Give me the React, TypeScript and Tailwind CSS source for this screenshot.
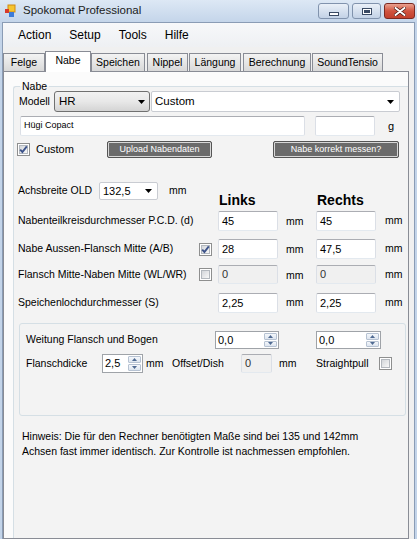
import React from 'react';

// Small triangle used by the combo boxes
function DropArrow() {
  return (
    <svg width="7" height="4" viewBox="0 0 7 4" className="shrink-0">
      <path d="M0 0 H7 L3.5 4 Z" fill="#000" />
    </svg>
  );
}

function CheckBox({ checked }: { checked?: boolean }) {
  return (
    <span className="relative w-[13px] h-[13px] shrink-0 border border-[#8e8f8f] bg-white p-[1px] flex">
      <span className="flex-1 border border-[#b3b8be] bg-gradient-to-br from-[#d3d6da] to-[#f8f8f8]" />
      {checked && (
        <svg width="13" height="13" viewBox="0 0 13 13" className="absolute left-[-1px] top-[-1px]">
          <path d="M3.2 6.6 L5.4 9 L9.8 3.4" stroke="#3d538a" strokeWidth="1.9" fill="none" />
        </svg>
      )}
    </span>
  );
}

function TextBox({
  value,
  className,
  disabled,
  small,
}: {
  value: string;
  className: string;
  disabled?: boolean;
  small?: boolean;
}) {
  return (
    <div
      className={`${className} flex items-center rounded-[2px] border border-t-[#abadb3] border-x-[#dbdfe6] border-b-[#e3e9ef] pl-[3px] ${
        disabled ? 'bg-[#f0f0f0] text-[#333]' : 'bg-white'
      } ${small ? 'text-[9px]' : 'text-[11px]'}`}
    >
      {value}
    </div>
  );
}

function Spinner({ value, className }: { value: string; className: string }) {
  return (
    <div className={`${className} flex border border-[#9fa3a8] bg-white`}>
      <span className="flex-1 flex items-center pl-[2px] text-[11px]">{value}</span>
      <span className="w-[15px] flex flex-col p-[1px] gap-[1px]">
        <span className="flex-1 flex items-center justify-center rounded-[1px] border border-[#b6c2d2] bg-gradient-to-b from-[#f4f7fb] to-[#dde5ef]">
          <svg width="5" height="3" viewBox="0 0 5 3">
            <path d="M0 3 L2.5 0 L5 3 Z" fill="#4f6a92" />
          </svg>
        </span>
        <span className="flex-1 flex items-center justify-center rounded-[1px] border border-[#b6c2d2] bg-gradient-to-b from-[#f4f7fb] to-[#dde5ef]">
          <svg width="5" height="3" viewBox="0 0 5 3">
            <path d="M0 0 L5 0 L2.5 3 Z" fill="#4f6a92" />
          </svg>
        </span>
      </span>
    </div>
  );
}

function DarkButton({ label, className }: { label: string; className: string }) {
  return (
    <div
      className={`${className} h-full flex items-center justify-center rounded-[2px] border border-[#555] bg-[#6b6b6b] text-white text-[9px] shadow-[inset_0_0_0_1px_#d8d8d8]`}
    >
      {label}
    </div>
  );
}

function Tab({ label, className, selected }: { label: string; className: string; selected?: boolean }) {
  if (selected) {
    return (
      <div
        className={`${className} relative z-10 h-[21px] -mb-px flex items-center justify-center pb-[3px] border border-b-0 border-[#898c95] bg-white`}
      >
        {label}
      </div>
    );
  }
  return (
    <div
      className={`${className} h-[18px] flex items-center justify-center border border-b-0 border-[#898c95] bg-gradient-to-b from-[#f3f3f3] via-[#e6e6e6] to-[#d9d9d9]`}
    >
      {label}
    </div>
  );
}

export default function App() {
  return (
    <div className="w-[417px] h-[539px] overflow-hidden flex flex-col bg-[#c3d4e9] font-['Liberation_Sans',Arial,sans-serif] text-black">
      {/* Title bar */}
      <div className="h-[22px] shrink-0 flex bg-gradient-to-b from-[#dde8f5] to-[#c4d5ea]">
        <svg width="16" height="16" viewBox="0 0 16 16" className="ml-[2px] mt-[3px]">
          <rect x="6" y="2" width="7" height="7" fill="#f5c531" stroke="#d08a12" strokeWidth="1" />
          <rect x="3" y="6" width="4" height="4" fill="#d83b2c" />
          <rect x="7" y="9" width="5" height="5" fill="#3d7bd9" />
        </svg>
        <span className="ml-[5px] self-center text-[11.5px] text-[#1b1b1b]">Spokomat Professional</span>
        <div className="ml-auto mr-[2px] mt-[3px] h-[16px] flex gap-[3px]">
          <div className="w-[31px] flex items-end justify-center pb-[2px] rounded-[3px] border border-[#8193ad] bg-gradient-to-b from-[#eaf0f8] to-[#c3d2e6]">
            <span className="w-[10px] h-[4px] bg-white border border-[#3a4a63]" />
          </div>
          <div className="w-[29px] flex items-center justify-center rounded-[3px] border border-[#8193ad] bg-gradient-to-b from-[#eaf0f8] to-[#c3d2e6]">
            <span className="w-[10px] h-[7px] border border-[#3a4a63] bg-white p-[1px] flex">
              <span className="flex-1 border border-[#3a4a63] border-t-2 bg-[#d5dfec]" />
            </span>
          </div>
          <div className="w-[31px] flex items-center justify-center rounded-[3px] border border-[#7b2a22] bg-gradient-to-b from-[#e9a190] via-[#d0533f] to-[#c2402d]">
            <svg width="12" height="9" viewBox="0 0 12 9">
              <path d="M1.5 1 L10.5 8 M10.5 1 L1.5 8" stroke="#4a1a14" strokeWidth="3.4" strokeLinecap="round" />
              <path d="M1.5 1 L10.5 8 M10.5 1 L1.5 8" stroke="#fff" strokeWidth="2" strokeLinecap="round" />
            </svg>
          </div>
        </div>
      </div>

      {/* Client area */}
      <div className="flex-1 min-h-0 flex flex-col mx-[2px] border-x border-t border-[#8a9cb5] bg-[#f0f0f0]">
        {/* Menu bar */}
        <div className="h-[24px] shrink-0 flex items-center pl-[6px] text-[12px] bg-gradient-to-b from-[#f7f8fa] to-[#eef0f3]">
          <span className="px-[9px]">Action</span>
          <span className="px-[9px]">Setup</span>
          <span className="px-[9px]">Tools</span>
          <span className="px-[9px]">Hilfe</span>
        </div>

        {/* Tabs */}
        <div className="mt-[4px] h-[20px] shrink-0 flex items-end text-[10.5px]">
          <Tab label="Felge" className="w-[42px]" />
          <Tab label="Nabe" className="w-[46px]" selected />
          <Tab label="Speichen" className="w-[54px]" />
          <Tab label="Nippel" className="ml-[2px] w-[41px]" />
          <Tab label="Längung" className="ml-[1px] w-[52px]" />
          <Tab label="Berechnung" className="ml-[2px] w-[68px]" />
          <Tab label="SoundTensio" className="ml-[1px] w-[71px]" />
        </div>

        {/* Tab page */}
        <div className="flex-1 min-h-0 w-[406px] overflow-hidden border border-[#898c95] bg-[#fbfbfb] pt-[9px] pl-[9px] text-[10.5px]">
          <fieldset className="w-[420px] min-h-[470px] border-l border-t border-[#d5dfe5] rounded-tl-[3px] bg-[#f3f3f3]">
            <legend className="ml-[6px] px-[2px] leading-[10px]">Nabe</legend>

            {/* Modell */}
            <div className="ml-[5px] h-[21px] flex items-center">
              <span className="w-[35px]">Modell</span>
              <div className="w-[96px] h-full flex items-center justify-between pl-[4px] pr-[4px] rounded-[3px] border border-[#707070] bg-gradient-to-b from-[#f2f2f2] via-[#e8e8e8] to-[#d4d4d4] text-[11.5px]">
                HR
                <DropArrow />
              </div>
              <div className="ml-[1px] w-[249px] h-full flex items-center justify-between pl-[3px] pr-[5px] rounded-[2px] border border-[#c9ccd2] bg-white text-[11.5px]">
                Custom
                <DropArrow />
              </div>
            </div>

            {/* Name / weight */}
            <div className="mt-[4px] ml-[6px] h-[20px] flex items-center">
              <TextBox value="Hügi Copact" className="w-[285px] h-full" small />
              <TextBox value="" className="ml-[10px] w-[60px] h-full" />
              <span className="ml-[13px] text-[11px]">g</span>
            </div>

            {/* Custom + buttons */}
            <div className="mt-[5px] ml-[3px] h-[17px] flex items-center">
              <CheckBox checked />
              <span className="ml-[6px] w-[71px] text-[11px]">Custom</span>
              <DarkButton label="Upload Nabendaten" className="w-[105px]" />
              <DarkButton label="Nabe korrekt messen?" className="ml-[61px] w-[126px]" />
            </div>

            {/* Achsbreite + column heads */}
            <div className="mt-[24px] ml-[4px] h-[29px] flex items-start">
              <div className="w-[200px] h-[18px] flex items-center">
                <span className="w-[81px]">Achsbreite OLD</span>
                <div className="w-[59px] h-full flex items-center justify-between pl-[3px] pr-[5px] rounded-[2px] border border-[#c9ccd2] bg-white text-[11px]">
                  132,5
                  <DropArrow />
                </div>
                <span className="ml-[11px]">mm</span>
              </div>
              <span className="w-[98px] self-end mb-[3px] pl-[1px] text-[14px] font-bold leading-[16px]">Links</span>
              <span className="self-end mb-[3px] pl-[1px] text-[14px] font-bold leading-[16px]">Rechts</span>
            </div>

            {/* Measurement rows */}
            <div className="ml-[4px] h-[20px] flex items-center">
              <span className="w-[200px]">Nabenteilkreisdurchmesser P.C.D. (d)</span>
              <TextBox value="45" className="w-[60px] h-full" />
              <span className="w-[38px] pl-[8px] pt-[2px]">mm</span>
              <TextBox value="45" className="w-[60px] h-full" />
              <span className="pl-[9px]">mm</span>
            </div>

            <div className="mt-[8px] ml-[4px] h-[20px] flex items-center">
              <span className="w-[181px]">Nabe Aussen-Flansch Mitte (A/B)</span>
              <span className="w-[19px] flex">
                <CheckBox checked />
              </span>
              <TextBox value="28" className="w-[60px] h-full" />
              <span className="w-[38px] pl-[8px] pt-[2px]">mm</span>
              <TextBox value="47,5" className="w-[60px] h-full" />
              <span className="pl-[9px]">mm</span>
            </div>

            <div className="mt-[6px] ml-[4px] h-[19px] flex items-center">
              <span className="w-[181px]">Flansch Mitte-Naben Mitte (WL/WR)</span>
              <span className="w-[19px] flex">
                <CheckBox />
              </span>
              <TextBox value="0" className="w-[60px] h-full" disabled />
              <span className="w-[38px] pl-[8px] pt-[2px]">mm</span>
              <TextBox value="0" className="w-[60px] h-full" disabled />
              <span className="pl-[9px]">mm</span>
            </div>

            <div className="mt-[9px] ml-[4px] h-[20px] flex items-center">
              <span className="w-[200px]">Speichenlochdurchmesser (S)</span>
              <TextBox value="2,25" className="w-[60px] h-full" />
              <span className="w-[38px] pl-[8px]">mm</span>
              <TextBox value="2,25" className="w-[60px] h-full" />
              <span className="pl-[9px]">mm</span>
            </div>

            {/* Weitung group */}
            <div className="mt-[10px] ml-[5px] w-[387px] h-[93px] rounded-[3px] border border-[#d5dfe5] pl-[6px]">
              <div className="mt-[7px] h-[18px] flex items-center">
                <span className="w-[189px]">Weitung Flansch und Bogen</span>
                <Spinner value="0,0" className="w-[64px] h-full" />
                <span className="w-[37px]" />
                <Spinner value="0,0" className="w-[65px] h-full" />
              </div>
              <div className="mt-[5px] h-[19px] flex items-center">
                <span className="w-[76px]">Flanschdicke</span>
                <Spinner value="2,5" className="w-[41px] h-full" />
                <span className="ml-[3px] w-[26px]">mm</span>
                <span className="w-[69px]">Offset/Dish</span>
                <TextBox value="0" className="w-[31px] h-full" disabled />
                <span className="ml-[7px] w-[37px]">mm</span>
                <span className="w-[63px]">Straightpull</span>
                <CheckBox />
              </div>
            </div>

            <p className="mt-[13px] ml-[8px] leading-[15px]">
              Hinweis: Die für den Rechner benötigten Maße sind bei 135 und 142mm
              <br />
              Achsen fast immer identisch. Zur Kontrolle ist nachmessen empfohlen.
            </p>
          </fieldset>
        </div>
      </div>
    </div>
  );
}
